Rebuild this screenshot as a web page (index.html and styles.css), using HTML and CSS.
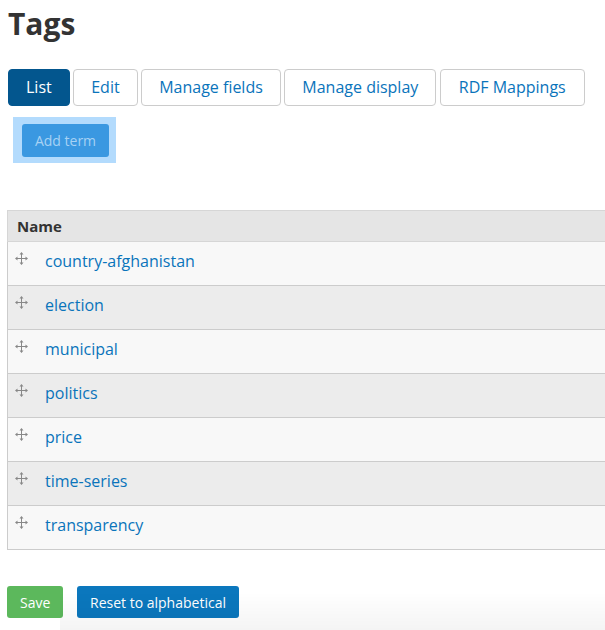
FILE: index.html
```html
<!DOCTYPE html>
<html lang="en">
<head>
<meta charset="utf-8">
<title>Tags</title>
<link rel="stylesheet" href="styles.css">
</head>
<body>
<div class="page">
  <h1 class="title">Tags</h1>
  <nav class="tabs">
    <a class="tab active" href="#">List</a>
    <a class="tab" href="#">Edit</a>
    <a class="tab" href="#">Manage fields</a>
    <a class="tab" href="#">Manage display</a>
    <a class="tab tab-wide" href="#">RDF Mappings</a>
  </nav>
  <div class="action-wrap">
    <a class="add-term" href="#">Add term</a>
  </div>

  <table class="terms">
    <thead>
      <tr><th>Name</th></tr>
    </thead>
    <tbody>
      <tr class="odd"><td><span class="drag"><svg viewBox="0 0 13 13" width="13" height="13"><path d="M6.5 1v11M1 6.5h11" stroke="#888" stroke-width="1"/><path d="M6.5 0L4.5 2.5h4zM6.5 13L4.5 10.5h4zM0 6.5L2.5 4.5v4zM13 6.5L10.5 4.5v4z" fill="#888"/></svg></span><a href="#">country-afghanistan</a></td></tr>
      <tr class="even"><td><span class="drag"><svg viewBox="0 0 13 13" width="13" height="13"><path d="M6.5 1v11M1 6.5h11" stroke="#888" stroke-width="1"/><path d="M6.5 0L4.5 2.5h4zM6.5 13L4.5 10.5h4zM0 6.5L2.5 4.5v4zM13 6.5L10.5 4.5v4z" fill="#888"/></svg></span><a href="#">election</a></td></tr>
      <tr class="odd"><td><span class="drag"><svg viewBox="0 0 13 13" width="13" height="13"><path d="M6.5 1v11M1 6.5h11" stroke="#888" stroke-width="1"/><path d="M6.5 0L4.5 2.5h4zM6.5 13L4.5 10.5h4zM0 6.5L2.5 4.5v4zM13 6.5L10.5 4.5v4z" fill="#888"/></svg></span><a href="#">municipal</a></td></tr>
      <tr class="even"><td><span class="drag"><svg viewBox="0 0 13 13" width="13" height="13"><path d="M6.5 1v11M1 6.5h11" stroke="#888" stroke-width="1"/><path d="M6.5 0L4.5 2.5h4zM6.5 13L4.5 10.5h4zM0 6.5L2.5 4.5v4zM13 6.5L10.5 4.5v4z" fill="#888"/></svg></span><a href="#">politics</a></td></tr>
      <tr class="odd"><td><span class="drag"><svg viewBox="0 0 13 13" width="13" height="13"><path d="M6.5 1v11M1 6.5h11" stroke="#888" stroke-width="1"/><path d="M6.5 0L4.5 2.5h4zM6.5 13L4.5 10.5h4zM0 6.5L2.5 4.5v4zM13 6.5L10.5 4.5v4z" fill="#888"/></svg></span><a href="#">price</a></td></tr>
      <tr class="even"><td><span class="drag"><svg viewBox="0 0 13 13" width="13" height="13"><path d="M6.5 1v11M1 6.5h11" stroke="#888" stroke-width="1"/><path d="M6.5 0L4.5 2.5h4zM6.5 13L4.5 10.5h4zM0 6.5L2.5 4.5v4zM13 6.5L10.5 4.5v4z" fill="#888"/></svg></span><a href="#">time-series</a></td></tr>
      <tr class="odd"><td><span class="drag"><svg viewBox="0 0 13 13" width="13" height="13"><path d="M6.5 1v11M1 6.5h11" stroke="#888" stroke-width="1"/><path d="M6.5 0L4.5 2.5h4zM6.5 13L4.5 10.5h4zM0 6.5L2.5 4.5v4zM13 6.5L10.5 4.5v4z" fill="#888"/></svg></span><a href="#">transparency</a></td></tr>
    </tbody>
  </table>

  <div class="actions">
    <button class="btn btn-save" type="button">Save</button>
    <button class="btn btn-reset" type="button">Reset to alphabetical</button>
  </div>
</div>
<div class="bottom-shade"></div>
</body>
</html>
```

FILE: styles.css
```css
html, body {
  margin: 0;
  padding: 0;
  background: #fff;
}
body {
  font-family: "Open Sans", "Liberation Sans", sans-serif;
  color: #333;
  overflow: hidden;
}
.page {
  padding-left: 7px;
}
.title {
  margin: 7px 0 0 1px;
  font-size: 30px;
  line-height: 34px;
  font-weight: 700;
  color: #333;
}
.tabs {
  display: flex;
  gap: 3.5px;
  margin: 28px 0 0 1px;
}
.tab {
  display: block;
  height: 37px;
  box-sizing: border-box;
  padding: 0 17px;
  border: 1px solid #ccc;
  border-radius: 4px;
  font-size: 16px;
  line-height: 35px;
  color: #0a74bb;
  text-decoration: none;
  white-space: nowrap;
}
.tab-wide {
  padding: 0 18px;
}
.tab.active {
  background: #03568e;
  border-color: #03568e;
  color: #fff;
}
.action-wrap {
  display: inline-block;
  margin: 11px 0 0 6px;
  padding: 7px 7px 6px 9px;
  background: #b3dbfd;
}
.add-term {
  display: block;
  width: 87px;
  height: 33px;
  box-sizing: border-box;
  border-radius: 3px;
  background: #3a98e1;
  color: #a7d2f4;
  font-size: 14px;
  line-height: 33px;
  text-align: center;
  text-decoration: none;
}
.terms {
  margin-top: 47px;
  width: 610px;
  border-collapse: collapse;
}
.terms th {
  height: 31px;
  box-sizing: border-box;
  padding: 0 0 0 9px;
  text-align: left;
  font-size: 15px;
  font-weight: 700;
  color: #333;
  background: #e5e5e5;
  border: 1px solid #d6d6d6;
  border-right: 0;
}
.terms td {
  height: 44px;
  box-sizing: border-box;
  padding: 0 0 6px 7px;
  border: 1px solid #cccccc;
  border-top: 0;
  border-right: 0;
  font-size: 16px;
}
.terms tr.odd td {
  background: #f8f8f8;
}
.terms tr.even td {
  background: #ececec;
}
.drag {
  display: inline-block;
  width: 13px;
  height: 13px;
  margin-right: 17px;
  vertical-align: 2px;
}
.drag svg {
  display: block;
}
.terms a {
  color: #0a74bb;
  text-decoration: none;
}
.actions {
  display: flex;
  gap: 14px;
  margin-top: 36px;
}
.btn {
  height: 32px;
  border: 0;
  border-radius: 3px;
  font-family: "Open Sans", "Liberation Sans", sans-serif;
  font-size: 14px;
  color: #fff;
  padding: 0 13px;
  cursor: pointer;
}
.btn-save {
  width: 56px;
  background: #5cb85c;
}
.btn-reset {
  width: 162px;
  background: #0b77bd;
}
.bottom-shade {
  position: fixed;
  left: 60px;
  right: 0;
  bottom: 0;
  height: 38px;
  background: linear-gradient(to bottom, rgba(0,0,0,0), rgba(0,0,0,0.045));
  pointer-events: none;
}
```
